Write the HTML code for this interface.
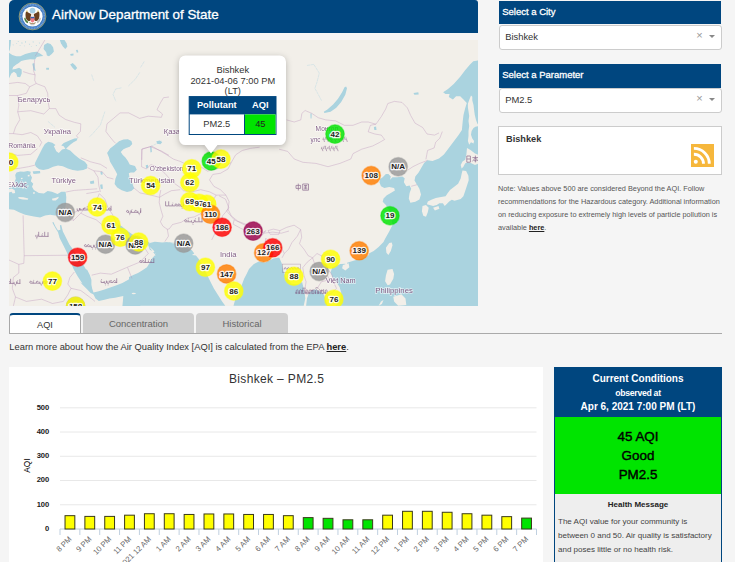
<!DOCTYPE html>
<html><head><meta charset="utf-8"><title>AirNow Department of State</title>
<style>
*{box-sizing:border-box;margin:0;padding:0}
html,body{width:735px;height:562px;overflow:hidden}
body{background:#f5f5f5;font-family:"Liberation Sans",sans-serif;color:#333;position:relative}
.abs{position:absolute}
#hdr{left:9px;top:0;width:469px;height:33px;background:#00467f;border-radius:5px 3px 0 0}
#hdr .t{left:43px;top:7px;font-size:13.4px;color:#fff;white-space:nowrap;-webkit-text-stroke:.3px #fff}
#map{left:9px;top:40px;width:469px;height:266px;background:#f2efe9;overflow:hidden}
.sh{left:498.6px;width:222.6px;height:23.3px;background:#00467f;color:#fff;font-size:9.5px;line-height:22px;padding-left:3.6px;-webkit-text-stroke:.3px #fff}
.sel{left:498.6px;width:223px;height:24.4px;background:#fff;border:1px solid #ccc;border-radius:3px;font-size:9.4px;line-height:21px;padding-left:5.6px;color:#333}
.sel .x{right:18px;top:-1px;color:#999;font-size:11px}
.sel .a{right:6px;top:8.6px;width:0;height:0;border-left:3px solid transparent;border-right:3px solid transparent;border-top:3.5px solid #888}
#rss{left:498px;top:126px;width:224px;height:49px;background:#fff;border:1px solid #ccc}
#rss b{left:7px;top:6.5px;font-size:9.2px;color:#333}
#note{left:498px;top:182px;width:230px;font-size:7.32px;line-height:13px;color:#555;white-space:nowrap}
#note b{color:#222;text-decoration:underline}
.tab{top:313px;height:20px;font-size:9.5px;line-height:22px;text-align:center;color:#666;background:#cfcfcf;border-radius:4px 4px 0 0}
#tline{left:9px;top:333px;width:713px;height:1px;background:#aaa}
#learn{left:9.3px;top:342px;font-size:9.36px;color:#333;white-space:nowrap}
#learn b{text-decoration:underline;color:#222}
#chart{left:9px;top:367px;width:534px;height:195px;background:#fff}
#cc{left:554px;top:367px;width:168px;height:195px;background:#eee;border:1px solid #00467f;border-bottom:0}
#cc .h{left:0;top:0;width:166px;height:49px;background:#00467f;color:#fff;text-align:center;font-weight:bold}
#cc .g{left:0;top:49px;width:166px;height:77px;background:#00e400;color:#000;text-align:center;font-size:13.4px;-webkit-text-stroke:.4px #000}
</style></head><body>
<div id="hdr" class="abs"><svg class="abs" style="left:9px;top:2px" width="29" height="29" viewBox="-14.5 -14.5 29 29">
<circle r="13.4" fill="#3d79c3" stroke="#b9ad5c" stroke-width=".7"/>
<circle r="11.8" fill="none" stroke="#78a4da" stroke-width="1.5" stroke-dasharray="1 .6"/>
<circle r="10.1" fill="#fdfdfb"/>
<circle cx="0" cy="-5.9" r="2.9" fill="#a5cfe4"/>
<path d="M-1-2.2C-3-3-5.5-5-6.6-4.6C-7.4-2-7 1.5-5.6 3.6C-4.2 5-2.4 4.6-1.6 3.2L-1.8 0zM1-2.2C3-3 5.5-5 6.6-4.6C7.4-2 7 1.5 5.6 3.6C4.2 5 2.4 4.6 1.6 3.2L1.8 0z" fill="#6a4220"/>
<path d="M-6.4-4.8l.9-1.6.8 1.9zM6.4-4.8l-.9-1.6-.8 1.9z" fill="#c9b44a"/>
<path d="M-1.9.3h3.8v3.6c0 1.3-1.9 2.1-1.9 2.1s-1.9-.8-1.9-2.1z" fill="#f07a86"/>
<path d="M-1.9.3h3.8v1.5h-3.8z" fill="#2f63ad"/>
<path d="M-1.3-1.9c.3-1 2.3-1 2.6 0l-.4 1.9h-1.8z" fill="#f4f1e8"/>
<path d="M-8.3 1.5c0 2.5 1.6 4.6 3.4 5.2l.8-1.4c-1.6-.8-2.8-2.3-3-4.2z" fill="#4f8040"/>
<path d="M8.3 1.5c0 2.5-1.6 4.6-3.4 5.2l-.8-1.4c1.6-.8 2.8-2.3 3-4.2z" fill="#b8b8b8"/>
<path d="M-3.4 5.2c1 .9 2.2 1.4 3.4 1.4s2.4-.5 3.4-1.4l-.6 1.9c-.8.7-1.8 1-2.8 1s-2-.3-2.8-1z" fill="#8a6a3c" fill-opacity=".7"/>
<path d="M-2.2 7.5h4.4l-.5 1.3h-3.4z" fill="#c9c9c9"/>
</svg><div class="abs t">AirNow Department of State</div></div>
<div id="map" class="abs"><svg class="abs" style="left:0;top:0" width="469" height="266" viewBox="0 0 469 266">
<rect width="469" height="266" fill="#f2efe9"/>
<defs><filter id="sb" x="-2%" y="-2%" width="104%" height="104%"><feGaussianBlur stdDeviation=".38"/></filter><filter id="mb" x="-2%" y="-2%" width="104%" height="104%"><feGaussianBlur stdDeviation=".45"/></filter></defs><g filter="url(#sb)">
<g fill="#aad3df"><path d="M0.0 12.7 3.3 15.0 7.3 16.3 11.4 16.3 16.3 13.9 22.9 12.2 27.8 11.8 31.8 13.9 34.3 16.0 31.8 16.3 27.8 17.1 26.1 19.6 21.2 19.3 16.3 19.9 12.2 20.9 9.8 22.9 7.3 24.5 4.1 26.9 3.3 29.4 6.5 29.1 10.1 27.8 12.7 29.4 12.7 33.5 11.1 37.2 8.2 36.7 7.3 33.5 4.9 31.8 2.4 33.5 0.8 36.7 0.0 38.4Z"/><path d="M0.0 0.0 2.0 0.0 1.6 4.9 0.8 9.8 0.0 11.4Z"/><path d="M35.1 4.9 38.4 2.9 41.6 4.1 44.1 7.3 44.9 11.4 42.8 13.9 40.0 16.3 37.9 15.5 37.2 12.2 34.6 9.0Z"/><path d="M50.9 0.0 55.5 0.0 57.5 3.3 58.4 6.5 56.3 9.0 53.9 6.5 51.9 3.3Z"/><path d="M23.3 23.7 25.3 22.9 25.8 26.9 26.6 31.0 24.8 30.2 24.0 26.9Z"/><path d="M61.2 24.5 63.7 22.9 66.1 25.3 68.2 28.1 66.1 30.2 63.7 28.1Z"/><path d="M61.2 13.9 64.5 13.6 64.5 15.5 61.7 15.7Z"/><path d="M37.2 27.8 40.0 27.8 40.0 29.7 37.2 29.7Z"/><path d="M66.9 10.1 68.6 9.8 69.4 12.2 67.8 12.7Z"/><path d="M8.7 1.0 10.0 1.1 9.8 1.6 8.8 1.5Z"/><path d="M12.4 2.5 13.4 2.6 13.3 3.7 12.6 3.6Z"/><path d="M16.2 1.2 17.1 1.4 16.9 2.7 16.3 2.6Z"/><path d="M19.9 3.7 21.2 3.9 21.0 4.5 20.0 4.4Z"/><path d="M23.7 1.5 24.6 1.6 24.5 2.5 23.8 2.4Z"/><path d="M26.8 5.0 27.9 5.1 27.8 5.7 26.9 5.6Z"/><path d="M29.9 2.5 30.6 2.6 30.5 3.7 30.0 3.6Z"/><path d="M10.6 5.0 11.6 5.1 11.5 5.6 10.7 5.5Z"/><path d="M14.9 5.6 15.7 5.7 15.6 6.3 15.1 6.2Z"/><path d="M7.5 3.1 8.1 3.2 8.0 4.1 7.6 4.0Z"/><path d="M21.8 6.2 22.8 6.3 22.7 6.7 21.9 6.6Z"/><path d="M3.7 4.4 4.5 4.5 4.4 5.4 3.9 5.2Z"/><path d="M26.1 122.7 28.6 117.8 31.0 112.9 33.5 108.0 35.9 103.9 39.2 101.8 43.3 102.7 46.5 105.0 44.9 106.3 47.3 111.2 49.8 112.9 53.1 109.6 56.3 108.8 54.7 106.3 52.2 105.5 54.7 103.1 60.4 100.6 65.3 98.5 68.6 98.2 67.8 100.6 64.5 102.2 61.2 104.7 58.8 107.1 57.1 108.8 61.2 110.4 65.3 114.5 70.2 118.6 75.9 121.8 78.4 125.1 78.0 128.4 74.3 130.0 68.6 130.8 63.7 130.0 58.8 128.4 53.9 126.2 49.0 125.6 44.1 126.7 39.2 128.9 34.3 130.0 30.2 129.2 26.9 126.7 25.8 124.3Z"/><path d="M23.7 131.6 31.0 131.1 31.3 133.3 24.5 133.8Z"/><path d="M80.8 141.4 84.9 140.6 85.2 143.6 81.6 143.9Z"/><path d="M91.1 144.7 93.4 144.2 93.9 148.8 91.8 149.1Z"/><path d="M91.4 132.1 93.4 131.8 93.7 134.4 91.9 134.7Z"/><path d="M98.1 112.9 101.1 108.4 105.6 104.9 110.0 101.3 114.4 99.6 118.9 99.2 122.4 101.0 123.3 104.0 120.7 106.7 117.1 108.1 114.4 109.3 111.8 112.0 113.6 114.7 116.2 117.3 118.9 120.9 120.7 124.4 126.0 125.9 127.8 129.8 125.1 132.4 121.6 132.4 119.8 133.3 120.7 138.7 123.3 143.1 125.1 148.4 122.4 151.1 118.0 152.0 112.7 150.2 108.2 147.6 105.6 144.0 106.4 138.7 108.2 134.2 106.4 130.7 103.8 126.2 101.1 121.8 99.9 117.3Z"/><path d="M147.3 101.3 150.9 100.6 153.2 102.2 151.4 104.2 148.2 103.8Z"/><path d="M141.1 106.7 142.5 106.7 142.9 112.0 141.5 112.4Z"/><path d="M136.7 125.3 139.0 124.8 139.3 127.6 137.2 128.4Z"/><path d="M0.0 169.2 5.0 169.8 10.0 172.3 16.2 174.8 24.9 176.6 31.1 177.5 36.1 175.6 41.1 174.8 46.1 175.5 49.8 174.8 53.5 172.3 56.0 168.5 57.0 163.6 57.3 157.3 56.6 151.7 52.3 151.7 48.5 153.9 42.9 151.7 38.6 151.1 34.9 153.6 29.9 153.1 24.9 149.9 23.0 146.8 24.3 143.7 21.8 141.2 23.0 137.4 21.2 134.3 21.8 131.8 18.7 131.0 14.9 131.8 11.2 131.5 7.5 132.4 6.2 134.9 6.8 138.7 5.6 141.8 7.5 144.9 6.2 146.8 3.7 146.1 1.2 147.4 0.0 148.0Z"/><path d="M23.7 131.8 30.5 131.2 31.1 133.1 24.9 133.7Z"/><path d="M43.3 182.4 46.5 188.2 49.0 192.2 50.6 198.0 54.7 206.1 58.0 212.7 61.2 220.8 64.5 229.0 68.6 236.3 73.5 243.7 71.0 242.2 74.3 245.5 78.3 249.6 81.6 252.9 83.7 254.1 84.5 254.5 86.5 258.6 89.8 261.0 95.5 259.8 100.4 258.6 106.1 257.8 111.8 256.5 114.3 256.1 113.9 261.0 113.4 265.9 131.4 265.9 131.4 233.3 128.1 235.7 123.2 237.3 119.2 239.8 113.4 243.1 106.9 245.5 101.2 247.6 95.5 249.6 89.8 251.2 84.5 252.4 83.2 248.8 82.4 244.7 82.4 239.8 80.8 234.9 78.3 230.0 76.7 229.0 70.2 217.6 64.5 210.2 60.4 204.5 56.3 196.3 53.9 191.4 52.2 184.9 50.9 185.2 51.4 189.8 49.0 190.6 46.5 186.5 44.4 182.0Z"/><path d="M109.1 184.3 112.8 186.2 117.2 189.9 122.1 193.6 127.1 196.7 133.4 199.2 138.3 201.1 140.8 203.0 139.0 204.8 135.8 207.3 130.9 208.6 125.9 207.3 120.9 204.8 117.2 201.1 114.0 196.1 110.9 191.1 108.4 187.4Z"/><path d="M140.8 203.0 145.8 201.7 153.3 202.4 160.8 202.1 166.0 203.0 142.9 201.2 152.7 202.0 162.4 202.9 169.0 204.5 175.5 206.9 182.9 210.2 185.3 213.5 182.9 215.1 186.9 215.6 189.4 218.4 191.8 222.4 195.1 229.0 198.4 235.5 201.6 242.0 204.9 248.6 209.0 255.1 213.1 261.6 216.3 265.7 120.0 265.7 120.0 265.7 120.0 239.6 120.0 237.1 124.9 234.7 129.0 233.1 133.1 230.6 138.0 227.3 140.4 223.3 142.9 218.4 146.9 214.3 144.5 210.2 139.6 206.1 147.1 216.1 145.8 212.3 140.8 209.8 139.0 204.8Z"/><path d="M224.5 265.7 226.1 260.0 228.6 253.5 232.7 245.3 235.1 238.8 237.6 233.9 240.0 229.0 240.0 229.0 244.9 224.1 249.8 221.6 256.3 222.4 264.5 218.4 270.2 217.6 272.7 223.3 274.3 230.6 276.7 237.1 282.4 243.7 289.0 244.5 293.1 242.0 293.9 245.3 295.5 251.8 296.3 258.4 294.7 265.7Z"/><path d="M297.1 265.7 298.0 258.4 299.6 253.5 302.9 250.2 306.9 249.4 311.8 251.8 315.1 255.1 316.7 260.0 318.4 265.7Z"/><path d="M468.9 20.4 464.3 21.2 461.0 24.5 456.1 30.2 451.2 36.7 444.7 44.1 439.0 49.0 434.1 52.2 436.5 53.9 440.6 53.9 439.8 57.1 443.9 59.6 447.1 56.3 451.2 56.3 454.5 59.6 457.8 62.9 456.1 68.6 454.5 75.1 453.7 81.6 452.9 90.0 449.6 94.9 444.7 101.4 439.8 108.0 434.9 114.5 430.0 118.6 423.5 121.0 418.6 120.2 415.3 122.7 412.9 126.7 409.6 132.4 406.3 136.5 405.5 140.6 408.0 144.7 410.4 148.8 412.0 154.5 410.4 159.4 406.3 161.8 401.4 162.7 399.8 158.6 400.6 152.9 402.2 148.8 400.6 145.5 397.3 146.3 394.9 142.2 395.7 138.2 393.3 136.5 388.4 137.3 383.5 137.3 381.0 139.8 381.8 136.5 379.4 134.1 376.9 134.1 373.7 137.3 371.2 139.0 370.4 142.2 372.0 146.3 375.3 148.0 380.2 147.1 385.1 148.0 385.9 150.4 381.8 152.9 377.8 155.3 374.5 158.6 373.7 161.8 376.9 165.1 380.2 170.0 381.8 174.9 382.7 180.0 383.5 184.9 380.2 191.4 376.1 198.8 374.5 202.0 369.6 206.9 364.7 211.0 359.8 213.5 360.0 215.1 352.7 218.4 344.5 220.8 338.0 222.8 338.0 224.1 338.8 228.2 337.1 227.3 336.3 223.8 331.4 224.1 324.9 226.5 323.3 227.3 321.6 232.2 323.3 237.1 327.3 242.0 330.6 246.9 332.2 252.7 331.4 258.4 329.0 263.3 326.5 265.7 469.0 266.0 469.0 20.0Z"/><path d="M337.1 46.5 338.0 48.2 336.3 54.7 332.2 62.0 327.3 67.8 321.6 71.8 315.4 73.0 314.8 71.8 318.4 69.4 324.1 64.5 329.0 58.8 333.1 52.2 335.5 47.3Z"/><path d="M404.5 53.1 409.3 52.2 409.7 54.4 405.4 54.8Z"/><path d="M364.9 87.0 367.1 86.6 367.5 90.1 365.3 90.1Z"/><path d="M301.4 73.5 302.7 73.5 302.5 78.4 301.6 78.4Z"/></g>
<path d="M122.8 252.9 124.9 252.7 126.9 253.2 126.5 254.0 124.1 254.2 122.9 253.7Z M42.9 158.8 46.1 158.0 49.8 156.7 49.2 158.6 46.7 160.5 43.6 160.5Z M9.3 157.1 14.3 157.3 19.3 158.6 18.7 159.8 13.7 159.6 9.7 158.6Z M0.0 149.3 2.5 148.6 5.6 149.9 6.2 153.0 3.7 153.6 2.5 151.7 0.0 152.4Z M11.8 138.1 13.4 137.8 13.7 138.9 12.1 139.2Z M15.6 141.8 17.2 141.5 17.4 142.9 15.8 143.2Z M18.1 145.5 19.4 145.3 19.7 146.5 18.3 146.8Z M13.1 147.4 14.7 147.1 14.9 148.4 13.3 148.6Z M10.0 143.0 11.5 142.7 12.0 144.4 10.5 144.6Z M23.9 152.6 25.6 152.1 25.9 153.6 24.4 154.1Z M18.7 134.9 20.5 134.7 20.7 136.2 18.9 136.4Z M462.0 55.6 463.3 56.8 463.3 60.6 464.5 64.9 465.1 69.9 465.8 74.9 467.0 79.9 468.3 83.6 470.1 86.1 466.4 86.7 464.5 88.0 462.6 91.1 462.0 94.8 463.3 98.6 465.1 101.1 464.5 103.6 462.0 102.3 460.2 104.8 458.9 101.1 459.5 96.1 459.5 91.1 460.2 86.1 459.5 81.1 460.2 76.1 459.5 71.2 458.9 67.4 458.9 63.7 460.2 59.9Z M458.0 108.1 461.5 109.9 466.0 113.5 470.4 115.3 470.4 123.3 466.0 125.1 462.4 123.3 458.8 122.4 456.2 123.3 454.4 126.8 452.6 128.6 451.7 125.1 453.5 121.5 456.2 119.7 457.4 114.4Z M453.5 130.4 457.1 130.9 459.4 135.7 459.7 140.2 458.0 145.5 456.2 150.9 454.4 156.2 451.7 158.9 449.1 159.8 445.5 160.7 442.8 159.8 440.2 161.6 437.5 164.2 435.7 166.0 433.9 163.3 430.4 163.3 427.7 165.1 424.1 166.0 420.6 165.1 417.9 164.2 418.8 161.6 422.4 159.8 426.8 158.0 432.1 157.1 436.6 156.2 438.4 153.5 441.0 150.0 444.6 147.3 449.1 143.8 451.7 138.4 452.6 134.0Z M413.5 166.0 417.0 165.1 419.7 167.8 418.8 172.2 417.0 176.7 414.3 175.8 412.9 171.3Z M424.1 167.8 429.5 166.0 430.4 168.7 425.9 170.5Z M380.2 202.9 382.7 202.5 383.5 205.3 381.8 211.0 379.4 215.1 377.4 212.7 376.9 207.8Z M378.6 229.8 383.5 229.0 385.1 233.9 384.3 238.8 381.0 244.5 378.6 245.3 376.1 241.2 376.9 235.5Z M384.3 256.7 392.4 254.3 396.5 258.4 397.3 264.9 389.2 265.7 385.1 261.6Z M369.6 265.7 372.0 261.6 374.5 260.0 372.9 264.1Z M333.9 224.9 339.6 223.3 340.4 227.3 336.3 230.6 333.1 228.2Z" fill="#f2efe9"/>
<path d="M112.1 47.9 106.7 49.0 104.0 54.4 106.7 60.9 M130.6 32.7 126.3 39.2 119.7 45.7 M135.0 21.8 131.7 27.2 M95.8 71.8 91.4 84.9 83.8 93.6 80.5 96.9 M82.7 34.8 84.5 40.3 M39.2 81.6 45.7 87.1 M141.5 106.7 150.2 102.3 152.4 101.2 M298.3 25.4 304.8 24.4 310.3 33.1 308.1 41.8 305.9 48.3 312.4 60.3" fill="none" stroke="#aad3df" stroke-width=".8" stroke-opacity=".45" stroke-linecap="round" stroke-dasharray="2.5 1.2"/>
<path d="M35.9 0.0 26.1 16.3 M25.7 19.6 24.4 30.5 26.1 34.8 M14.1 31.6 20.7 33.7 26.1 34.8 25.7 40.3 27.2 43.5 M0.0 43.5 8.7 42.4 16.3 43.5 20.7 46.8 27.2 43.5 M20.7 46.8 17.4 53.3 8.7 55.5 0.0 55.5 M8.7 55.5 9.8 65.3 8.7 71.8 10.9 79.5 6.5 87.1 4.4 93.6 M27.2 43.5 35.9 46.8 38.7 53.3 39.2 62.0 40.3 68.6 M8.7 71.8 21.8 70.7 34.8 74.0 40.3 68.6 M40.3 68.6 46.8 68.6 50.1 75.1 56.6 79.5 65.3 82.3 71.8 83.8 71.4 91.4 67.5 95.8 69.2 98.0 M4.4 93.6 13.1 94.7 21.8 92.5 28.3 95.8 32.7 102.3 30.5 106.7 M0.0 93.6 4.4 93.6 M0.0 113.2 8.7 115.4 21.8 114.3 28.3 108.8 M160.0 57.0 154.5 57.7 151.3 63.1 148.0 69.7 153.5 74.0 152.4 77.3 139.3 76.2 130.6 78.4 119.7 72.9 111.0 72.9 104.5 78.4 98.0 83.8 96.9 91.4 100.1 95.8 104.5 101.2 106.7 103.4 M132.8 119.9 133.2 108.8 141.5 106.7 152.4 111.0 160.0 115.4 M0.0 129.2 9.8 128.4 19.6 126.7 26.1 125.1 M57.1 152.0 65.3 150.4 76.7 149.6 88.2 148.8 M71.8 117.8 81.6 121.8 91.4 124.3 98.0 128.4 M78.4 127.6 84.9 130.8 89.0 137.3 89.8 145.5 91.4 152.0 M84.9 130.8 93.1 131.6 98.0 137.3 104.5 139.0 M132.6 126.8 132.6 109.4 142.9 106.1 155.9 113.7 164.6 119.2 171.2 121.4 175.5 123.5 M132.6 126.8 137.4 129.0 141.8 124.6 148.3 126.8 155.9 133.3 163.5 142.0 171.2 147.5 174.4 150.7 M124.4 147.5 130.9 152.9 141.8 155.1 150.5 157.3 155.9 154.0 162.4 150.7 171.2 149.7 M191.8 126.8 198.4 131.2 207.1 129.0 215.8 126.8 222.3 122.4 226.7 114.8 233.2 110.5 241.9 108.3 250.6 107.2 M222.3 122.4 219.0 129.0 211.4 133.3 203.8 134.4 200.5 139.9 204.9 146.4 211.4 149.7 216.9 155.1 M174.4 150.7 183.1 151.8 191.8 149.7 200.5 151.8 207.1 155.1 216.9 155.1 220.1 161.6 219.0 169.2 M219.0 169.2 222.3 175.8 228.8 181.2 237.5 184.5 246.3 188.8 255.0 193.2 263.7 192.1 272.4 193.2 280.0 191.0 M207.1 155.1 202.7 162.7 196.2 167.1 191.8 173.6 185.3 176.9 178.8 178.0 172.2 182.3 163.5 184.5 160.3 188.8 M151.8 150.0 150.8 155.0 150.2 162.5 152.0 170.0 153.9 176.2 151.4 181.8 153.9 186.2 158.3 189.3 159.5 196.1 155.8 201.7 M158.3 189.3 160.3 188.8 M219.0 169.2 213.6 175.8 211.4 184.5 207.1 191.0 202.7 199.9 M277.6 79.9 285.2 82.0 291.8 79.9 292.9 73.3 296.1 70.5 302.7 73.3 309.2 77.7 316.8 79.9 326.6 80.9 335.3 85.3 344.0 85.3 352.7 82.0 359.2 82.0 366.9 84.2 M366.9 84.2 372.3 76.6 376.7 69.0 378.8 63.5 385.4 61.4 393.0 62.4 398.4 67.9 401.7 75.5 406.0 83.1 413.7 87.5 418.0 94.0 425.6 95.1 430.0 92.9 M270.0 109.2 278.7 111.4 285.2 119.0 293.9 122.3 307.0 123.4 319.0 126.7 330.9 123.4 341.8 119.0 344.0 113.6 352.7 109.2 363.6 106.0 370.1 102.7 375.6 99.5 372.3 95.1 365.8 94.0 359.2 91.8 361.4 85.3 366.9 84.2 M433.3 91.6 430.8 98.2 426.7 102.2 425.1 108.0 418.6 110.4 417.8 114.5 416.9 119.4 M399.0 130.0 403.9 126.7 410.4 123.5 416.9 121.0 418.6 120.2 M402.2 146.3 408.0 144.7 M210.0 155.8 216.5 159.1 219.8 167.8 217.6 171.0 225.2 179.7 233.9 184.1 242.7 188.4 253.5 192.8 256.8 190.6 M225.2 179.7 224.1 184.1 231.8 188.4 242.7 192.8 253.5 195.0 256.8 190.6 M259.0 190.6 264.4 189.1 270.9 190.6 269.9 194.3 261.2 194.3 259.0 190.6 M270.9 190.6 277.5 187.4 285.1 185.2 291.6 189.5 288.4 196.1 282.9 202.6 279.7 209.1 275.3 213.5 273.1 217.8 M261.2 217.8 259.0 211.3 255.7 204.8 256.8 198.2 261.2 202.6 266.6 201.5 272.0 202.6 273.1 209.1 275.3 213.5 M291.6 189.5 292.7 197.2 290.5 203.7 294.9 209.1 299.2 215.7 303.6 217.8 M303.6 217.8 298.2 222.2 293.8 227.6 294.9 235.2 297.1 241.8 296.0 248.3 298.2 254.8 M303.6 217.8 308.0 213.5 312.3 215.7 318.8 213.5 323.2 215.7 330.8 220.0 M312.3 215.7 314.5 222.2 318.8 228.7 323.2 235.2 324.3 241.8 327.5 248.3 323.2 252.7 318.8 254.8 M303.6 217.8 305.8 224.4 303.6 232.0 310.1 229.8 316.7 233.1 321.0 239.6 324.3 241.8 M321.0 239.6 312.3 241.8 309.0 247.2 M14.1 175.4 15.2 215.7 59.9 215.2 M15.2 215.7 14.8 223.3 9.8 224.4 9.8 233.1 4.4 237.4 3.3 248.3 6.5 257.0 4.4 265.9 M0.0 220.0 9.8 224.4 M65.3 232.0 60.9 237.4 58.8 244.0 62.0 248.3 58.8 254.8 54.4 261.4 M62.0 248.3 71.8 250.5 80.5 257.0 86.0 261.4 M6.5 257.0 17.4 261.4 32.7 259.2 43.5 263.5 54.4 261.4 M82.7 235.2 91.4 233.1 102.3 234.2 117.5 227.6 130.6 222.2 139.3 213.5 135.0 206.9 128.4 205.9 M118.6 227.6 123.0 238.5 M64.2 180.8 71.8 173.2 78.4 176.5 87.1 179.7 93.6 185.2 102.3 188.4 104.5 191.7 M90.3 153.6 95.8 159.1 99.0 167.8 103.4 174.3 107.7 184.1 111.0 187.4 M77.3 153.6 90.3 151.4 M90.3 153.6 87.1 161.2 76.2 167.8 71.8 173.2 M64.2 180.8 63.1 173.2 76.2 167.8 M58.8 172.1 62.0 180.8" fill="none" stroke="#b48ab4" stroke-width=".65" stroke-opacity=".55" stroke-linejoin="round"/>
</g>
<g font-family="Liberation Sans, sans-serif" fill="#7b5680" stroke="#fff" stroke-width="1.3" stroke-opacity=".65" paint-order="stroke" opacity=".95">
<text x="8.7" y="62.0" font-size="7.4" textLength="32.7" lengthAdjust="spacingAndGlyphs">Беларусь</text>
<text x="34.8" y="94.0" font-size="7.2" textLength="27.2" lengthAdjust="spacingAndGlyphs">Україна</text>
<text x="-0.8" y="108.3" font-size="7.2" textLength="27.4" lengthAdjust="spacingAndGlyphs">România</text>
<text x="-2.5" y="147.4" font-size="7.2" textLength="20.5" lengthAdjust="spacingAndGlyphs">Ελλάς</text>
<text x="42.4" y="143.0" font-size="7.2" textLength="24.6" lengthAdjust="spacingAndGlyphs">Türkiye</text>
<text x="154.8" y="93.6" font-size="7.2" textLength="35.2" lengthAdjust="spacingAndGlyphs">Қазақстан</text>
<text x="140.7" y="131.0" font-size="7.2" textLength="33.7" lengthAdjust="spacingAndGlyphs">O'zbekiston</text>
<text x="120.0" y="143.0" font-size="7.2" textLength="45.7" lengthAdjust="spacingAndGlyphs">Türkmenistan</text>
<text x="211.0" y="217.2" font-size="7.2" textLength="16.4" lengthAdjust="spacingAndGlyphs">India</text>
<text x="366.3" y="253.2" font-size="7.2" textLength="37.6" lengthAdjust="spacingAndGlyphs">Philippines</text>
<text x="316.7" y="243.4" font-size="7.2" textLength="30.0" lengthAdjust="spacingAndGlyphs">Việt Nam</text>
<text x="306.6" y="90.8" font-size="7.2" textLength="22.4" lengthAdjust="spacingAndGlyphs">Монгол</text>
<text x="301.6" y="102.2" font-size="7.2" textLength="9.8" lengthAdjust="spacingAndGlyphs">улс</text>
</g>
<g opacity=".8">
<path d="M131.7 168.6V172.4M131.7 170.9q.3 2.6 -1.5 2.6t-1.5 -2.2M128.7 172.4H126.7a1 1 0 1 1 1 -1.3M125.7 172.4H122.4v-1.6M122.0 170.9q.3 2.6 -1.2 2.6t-1.2 -2.2M119.0 172.4H118.5a1 1 0 1 1 1 -1.3" fill="none" stroke="#7b5680" stroke-width=".75" stroke-linecap="round" stroke-linejoin="round"/><circle cx="130.2" cy="174.8" r=".45" fill="#7b5680"/><circle cx="123.0" cy="169.4" r=".45" fill="#7b5680"/><circle cx="120.8" cy="174.8" r=".45" fill="#7b5680"/>
<path d="M174.4 162.1V165.9M174.4 164.4q.3 2.6 -1.3 2.6t-1.3 -2.2M171.3 165.9H169.9a1 1 0 1 1 1 -1.3M168.8 165.9H167.0a1 1 0 1 1 1 -1.3M165.7 165.9H163.3v-1.6M162.8 165.9H159.7V161.7M159.0 165.9H156.6V161.7" fill="none" stroke="#7b5680" stroke-width=".75" stroke-linecap="round" stroke-linejoin="round"/><circle cx="173.1" cy="168.3" r=".45" fill="#7b5680"/><circle cx="163.9" cy="162.9" r=".45" fill="#7b5680"/>
<path d="M193.0 178.0V181.8M193.0 181.8H189.9V177.6M189.3 181.8H186.1v-1.6M185.4 180.3q.3 2.6 -1.5 2.6t-1.5 -2.2M181.7 181.8H179.1v-1.6M178.4 181.8H176.6a1 1 0 1 1 1 -1.3" fill="none" stroke="#7b5680" stroke-width=".75" stroke-linecap="round" stroke-linejoin="round"/><circle cx="186.7" cy="178.8" r=".45" fill="#7b5680"/><circle cx="184.0" cy="184.2" r=".45" fill="#7b5680"/><circle cx="179.7" cy="178.8" r=".45" fill="#7b5680"/>
<path d="M144.8 218.7V222.5M144.8 222.5H142.0v-1.6M141.8 222.5H139.4v-1.6M139.0 222.5H136.4V218.3M136.4 222.5H134.2a1 1 0 1 1 1 -1.3M132.6 222.5H131.6a1 1 0 1 1 1 -1.3" fill="none" stroke="#7b5680" stroke-width=".75" stroke-linecap="round" stroke-linejoin="round"/><circle cx="142.6" cy="219.5" r=".45" fill="#7b5680"/><circle cx="140.0" cy="219.5" r=".45" fill="#7b5680"/>
<path d="M39.0 192.6V196.4M39.0 196.4H35.7V192.2M35.3 196.4H33.1v-1.6M32.6 196.4H29.7V192.2M29.0 194.9q.3 2.6 -1.1 2.6t-1.1 -2.2" fill="none" stroke="#7b5680" stroke-width=".75" stroke-linecap="round" stroke-linejoin="round"/><circle cx="33.7" cy="193.4" r=".45" fill="#7b5680"/><circle cx="27.9" cy="198.8" r=".45" fill="#7b5680"/>
<path d="M91.0 202.8V206.6M91.0 205.1q.3 2.6 -1.3 2.6t-1.3 -2.2M88.1 205.1q.3 2.6 -1.5 2.6t-1.5 -2.2M84.9 205.1q.3 2.6 -1.6 2.6t-1.6 -2.2M81.4 206.6H79.4a1 1 0 1 1 1 -1.3M78.0 206.6H76.4a1 1 0 1 1 1 -1.3" fill="none" stroke="#7b5680" stroke-width=".75" stroke-linecap="round" stroke-linejoin="round"/><circle cx="89.7" cy="209.0" r=".45" fill="#7b5680"/><circle cx="86.5" cy="209.0" r=".45" fill="#7b5680"/><circle cx="83.4" cy="209.0" r=".45" fill="#7b5680"/>
<path d="M37.0 239.4V243.2M37.0 243.2H35.1a1 1 0 1 1 1 -1.3M33.9 241.7q.3 2.6 -1.6 2.6t-1.6 -2.2M30.6 243.2H28.3a1 1 0 1 1 1 -1.3M27.3 243.2H24.2v-1.6M24.1 243.2H21.7a1 1 0 1 1 1 -1.3" fill="none" stroke="#7b5680" stroke-width=".75" stroke-linecap="round" stroke-linejoin="round"/><circle cx="32.2" cy="245.6" r=".45" fill="#7b5680"/><circle cx="24.8" cy="240.2" r=".45" fill="#7b5680"/>
<path d="M10.9 239.6V243.4M10.9 243.4H8.2v-1.6M7.7 241.9q.3 2.6 -1.4 2.6t-1.4 -2.2M4.6 243.4H1.6V239.2M1.5 243.4H0.0a1 1 0 1 1 1 -1.3" fill="none" stroke="#7b5680" stroke-width=".75" stroke-linecap="round" stroke-linejoin="round"/><circle cx="8.8" cy="240.4" r=".45" fill="#7b5680"/><circle cx="6.3" cy="245.8" r=".45" fill="#7b5680"/>
<path d="M107.7 238.7V242.5M107.7 242.5H105.5a1 1 0 1 1 1 -1.3M103.8 242.5H102.0a1 1 0 1 1 1 -1.3M100.3 241.0q.3 2.6 -1.2 2.6t-1.2 -2.2M97.5 241.0q.3 2.6 -1.2 2.6t-1.2 -2.2M95.0 242.5H92.1v-1.6" fill="none" stroke="#7b5680" stroke-width=".75" stroke-linecap="round" stroke-linejoin="round"/><circle cx="99.1" cy="244.9" r=".45" fill="#7b5680"/><circle cx="96.4" cy="244.9" r=".45" fill="#7b5680"/><circle cx="92.7" cy="239.5" r=".45" fill="#7b5680"/>
<path d="M102.0 166.2V170.0M102.0 170.0H100.5a1 1 0 1 1 1 -1.3M99.1 170.0H96.7V165.8M96.7 170.0H93.9V165.8M93.4 170.0H91.4a1 1 0 1 1 1 -1.3M89.9 170.0H86.9v-1.6M86.8 170.0H85.1a1 1 0 1 1 1 -1.3M83.8 168.5q.3 2.6 -1.1 2.6t-1.1 -2.2M80.9 170.0H78.1v-1.6M77.5 170.0H75.3a1 1 0 1 1 1 -1.3M74.2 170.0H71.0v-1.6M70.5 168.5q.3 2.6 -1.2 2.6t-1.2 -2.2" fill="none" stroke="#7b5680" stroke-width=".75" stroke-linecap="round" stroke-linejoin="round"/><circle cx="87.5" cy="167.0" r=".45" fill="#7b5680"/><circle cx="82.7" cy="172.4" r=".45" fill="#7b5680"/><circle cx="78.7" cy="167.0" r=".45" fill="#7b5680"/>
<path d="M287.1 253.5a.6 .6 0 1 1 .1 0v-3q1.0 -1.4 1.9 0v3.2M290.3 253.5a.6 .6 0 1 1 .1 0v-3q1.0 -1.4 1.9 0v3.2M293.3 250.0a.6 .6 0 1 0 .1 0v3.6h1.8v-4M296.8 253.5a.6 .6 0 1 1 .1 0v-3q1.0 -1.4 1.9 0v3.2M300.0 253.5a.6 .6 0 1 1 .1 0v-3q1.0 -1.4 1.9 0v3.2M303.0 250.0a.6 .6 0 1 0 .1 0v3.6h1.8v-4M306.4 253.5a.6 .6 0 1 1 .1 0v-3q1.0 -1.4 1.9 0v3.2M309.6 253.5a.6 .6 0 1 1 .1 0v-3q1.0 -1.4 1.9 0v3.2M312.7 250.0a.6 .6 0 1 0 .1 0v3.6h1.8v-4M316.1 253.5a.6 .6 0 1 1 .1 0v-3q1.0 -1.4 1.9 0v3.2M293.7 248.2h2.6M306.6 248.0q1.3 -1 2.6 0" fill="none" stroke="#7b5680" stroke-width=".7" stroke-linecap="round"/>
<path d="M287.0 145.4h4.6v3h-4.6zM289.3 143.6v6.9M293.7 144.0h5.8v6.2h-5.8zM295.0 145.5h3.2M295.0 147.1h3.2M294.8 148.8h3.6M296.6 145.5v3.3" fill="none" stroke="#7b5680" stroke-width=".75"/>
<path d="M457.8 116.0h3.6v6.2h-3.6zM457.8 119.0h3.6M463.4 117.6h6M466.4 115.6v6.8M466.4 117.8l-3 3.6M466.4 117.8l3 3.6M465.0 120.7h2.8" fill="none" stroke="#7b5680" stroke-width=".75"/>
<path d="M312.4 108.8l0.4 -1.6M313.2 108.8l.6 2M314.3 108.8l1.0 -2.6M316.2 108.8l0.4 -2.6M317.0 108.8l.6 2M318.1 108.8l1.0 -1.6M320.0 108.8l0.4 -2.6M320.8 108.8l.6 2M321.9 108.8l1.0 -2.6M323.8 108.8l0.4 -1.6M324.6 108.8l.6 2M325.7 108.8l1.0 -2.6M327.6 108.8l0.4 -2.6M328.4 108.8l.6 2" fill="none" stroke="#7b5680" stroke-width=".6" stroke-linecap="round"/>
<path d="M314.0 99.6l0.4 -1.6M314.8 99.6l.6 2M315.9 99.6l1.0 -2.6M317.8 99.6l0.4 -2.6M318.6 99.6l.6 2M319.7 99.6l1.0 -1.6M321.6 99.6l0.4 -2.6M322.4 99.6l.6 2M323.5 99.6l1.0 -2.6M325.4 99.6l0.4 -1.6M326.2 99.6l.6 2M327.3 99.6l1.0 -2.6M329.2 99.6l0.4 -2.6M330.0 99.6l.6 2M331.1 99.6l1.0 -1.6M333.0 99.6l0.4 -2.6M333.8 99.6l.6 2M334.9 99.6l1.0 -2.6M336.8 99.6l0.4 -1.6M337.6 99.6l.6 2" fill="none" stroke="#7b5680" stroke-width=".6" stroke-linecap="round"/>
<rect x="273.6" y="224.1" width="18.0" height="8.2" fill="none" stroke="#7b5680" stroke-width=".5" stroke-opacity=".7"/><path d="M275.1 229.5a1.1 1.9 0 1 1 2.2 0M278.3 229.5a1.1 1.9 0 1 1 2.2 0M281.5 229.5a1.1 1.9 0 1 1 2.2 0M284.7 229.5a1.1 1.9 0 1 1 2.2 0M287.9 229.5a1.1 1.9 0 1 1 2.2 0" fill="none" stroke="#7b5680" stroke-width=".7"/>
</g><defs><filter id="pb" x="-20%" y="-20%" width="140%" height="140%"><feGaussianBlur stdDeviation="3"/></filter></defs><g filter="url(#mb)">
<circle cx="-0.2" cy="122.0" r="9.3" fill="#ffff00" fill-opacity=".82" stroke="#ffff00" stroke-opacity=".4" stroke-width="1.4"/>
<circle cx="56.3" cy="172.4" r="9.3" fill="#999999" fill-opacity=".82" stroke="#999999" stroke-opacity=".4" stroke-width="1.4"/>
<circle cx="88.2" cy="167.0" r="9.3" fill="#ffff00" fill-opacity=".82" stroke="#ffff00" stroke-opacity=".4" stroke-width="1.4"/>
<circle cx="102.0" cy="184.9" r="9.3" fill="#ffff00" fill-opacity=".82" stroke="#ffff00" stroke-opacity=".4" stroke-width="1.4"/>
<circle cx="96.5" cy="204.2" r="9.3" fill="#999999" fill-opacity=".82" stroke="#999999" stroke-opacity=".4" stroke-width="1.4"/>
<circle cx="111.3" cy="197.3" r="9.3" fill="#ffff00" fill-opacity=".82" stroke="#ffff00" stroke-opacity=".4" stroke-width="1.4"/>
<circle cx="126.2" cy="205.0" r="9.3" fill="#999999" fill-opacity=".82" stroke="#999999" stroke-opacity=".4" stroke-width="1.4"/>
<circle cx="129.7" cy="202.0" r="9.3" fill="#ffff00" fill-opacity=".82" stroke="#ffff00" stroke-opacity=".4" stroke-width="1.4"/>
<circle cx="68.6" cy="217.2" r="9.3" fill="#ff0000" fill-opacity=".82" stroke="#ff0000" stroke-opacity=".4" stroke-width="1.4"/>
<circle cx="43.4" cy="241.1" r="9.3" fill="#ffff00" fill-opacity=".82" stroke="#ffff00" stroke-opacity=".4" stroke-width="1.4"/>
<circle cx="66.6" cy="266.2" r="9.3" fill="#999999" fill-opacity=".82" stroke="#999999" stroke-opacity=".4" stroke-width="1.4"/>
<circle cx="66.6" cy="266.2" r="9.3" fill="#ffff00" fill-opacity=".82" stroke="#ffff00" stroke-opacity=".4" stroke-width="1.4"/>
<circle cx="141.6" cy="145.5" r="9.3" fill="#ffff00" fill-opacity=".82" stroke="#ffff00" stroke-opacity=".4" stroke-width="1.4"/>
<circle cx="182.8" cy="128.7" r="9.3" fill="#ffff00" fill-opacity=".82" stroke="#ffff00" stroke-opacity=".4" stroke-width="1.4"/>
<circle cx="180.8" cy="142.5" r="9.3" fill="#ffff00" fill-opacity=".82" stroke="#ffff00" stroke-opacity=".4" stroke-width="1.4"/>
<circle cx="202.3" cy="121.0" r="9.3" fill="#00e400" fill-opacity=".82" stroke="#00e400" stroke-opacity=".4" stroke-width="1.4"/>
<circle cx="212.0" cy="119.1" r="9.3" fill="#ffff00" fill-opacity=".82" stroke="#ffff00" stroke-opacity=".4" stroke-width="1.4"/>
<circle cx="180.8" cy="161.6" r="9.3" fill="#ffff00" fill-opacity=".82" stroke="#ffff00" stroke-opacity=".4" stroke-width="1.4"/>
<circle cx="190.0" cy="163.2" r="9.3" fill="#ffff00" fill-opacity=".82" stroke="#ffff00" stroke-opacity=".4" stroke-width="1.4"/>
<circle cx="197.8" cy="164.2" r="9.3" fill="#ffff00" fill-opacity=".82" stroke="#ffff00" stroke-opacity=".4" stroke-width="1.4"/>
<circle cx="201.6" cy="174.3" r="9.3" fill="#ff7e00" fill-opacity=".82" stroke="#ff7e00" stroke-opacity=".4" stroke-width="1.4"/>
<circle cx="213.1" cy="187.3" r="9.3" fill="#ff0000" fill-opacity=".82" stroke="#ff0000" stroke-opacity=".4" stroke-width="1.4"/>
<circle cx="174.7" cy="203.3" r="9.3" fill="#999999" fill-opacity=".82" stroke="#999999" stroke-opacity=".4" stroke-width="1.4"/>
<circle cx="196.4" cy="227.3" r="9.3" fill="#ffff00" fill-opacity=".82" stroke="#ffff00" stroke-opacity=".4" stroke-width="1.4"/>
<circle cx="217.6" cy="233.9" r="9.3" fill="#ff7e00" fill-opacity=".82" stroke="#ff7e00" stroke-opacity=".4" stroke-width="1.4"/>
<circle cx="224.8" cy="251.0" r="9.3" fill="#ffff00" fill-opacity=".82" stroke="#ffff00" stroke-opacity=".4" stroke-width="1.4"/>
<circle cx="244.1" cy="191.1" r="9.3" fill="#99004c" fill-opacity=".82" stroke="#99004c" stroke-opacity=".4" stroke-width="1.4"/>
<circle cx="254.7" cy="212.7" r="9.3" fill="#ff7e00" fill-opacity=".82" stroke="#ff7e00" stroke-opacity=".4" stroke-width="1.4"/>
<circle cx="263.7" cy="207.8" r="9.3" fill="#ff0000" fill-opacity=".82" stroke="#ff0000" stroke-opacity=".4" stroke-width="1.4"/>
<circle cx="310.2" cy="231.4" r="9.3" fill="#999999" fill-opacity=".82" stroke="#999999" stroke-opacity=".4" stroke-width="1.4"/>
<circle cx="321.6" cy="219.2" r="9.3" fill="#ffff00" fill-opacity=".82" stroke="#ffff00" stroke-opacity=".4" stroke-width="1.4"/>
<circle cx="284.9" cy="236.3" r="9.3" fill="#ffff00" fill-opacity=".82" stroke="#ffff00" stroke-opacity=".4" stroke-width="1.4"/>
<circle cx="350.2" cy="210.8" r="9.3" fill="#ff7e00" fill-opacity=".82" stroke="#ff7e00" stroke-opacity=".4" stroke-width="1.4"/>
<circle cx="324.9" cy="259.2" r="9.3" fill="#ffff00" fill-opacity=".82" stroke="#ffff00" stroke-opacity=".4" stroke-width="1.4"/>
<circle cx="326.0" cy="94.1" r="9.3" fill="#00e400" fill-opacity=".82" stroke="#00e400" stroke-opacity=".4" stroke-width="1.4"/>
<circle cx="362.2" cy="135.5" r="9.3" fill="#ff7e00" fill-opacity=".82" stroke="#ff7e00" stroke-opacity=".4" stroke-width="1.4"/>
<circle cx="389.2" cy="126.7" r="9.3" fill="#999999" fill-opacity=".82" stroke="#999999" stroke-opacity=".4" stroke-width="1.4"/>
<circle cx="381.0" cy="175.7" r="9.3" fill="#00e400" fill-opacity=".82" stroke="#00e400" stroke-opacity=".4" stroke-width="1.4"/>
</g><g font-family="Liberation Sans, sans-serif" font-size="8" font-weight="bold" text-anchor="middle" fill="#222" stroke="#fff" stroke-width="2.6" stroke-opacity=".9" stroke-linejoin="round" paint-order="stroke">
<text x="-0.2" y="124.6">60</text>
<text x="56.3" y="175.0">N/A</text>
<text x="88.2" y="169.6">74</text>
<text x="102.0" y="187.5">61</text>
<text x="96.5" y="206.8">N/A</text>
<text x="111.3" y="199.9">76</text>
<text x="126.2" y="207.6">N/A</text>
<text x="129.7" y="204.6">88</text>
<text x="68.6" y="219.8">159</text>
<text x="43.4" y="243.7">77</text>
<text x="66.6" y="268.8"></text>
<text x="66.6" y="268.8">158</text>
<text x="141.6" y="148.1">54</text>
<text x="182.8" y="131.3">71</text>
<text x="180.8" y="145.1">62</text>
<text x="202.3" y="123.6">45</text>
<text x="212.0" y="121.7">58</text>
<text x="180.8" y="164.2">69</text>
<text x="190.0" y="165.8">97</text>
<text x="197.8" y="166.8">61</text>
<text x="201.6" y="176.9">110</text>
<text x="213.1" y="189.9">186</text>
<text x="174.7" y="205.9">N/A</text>
<text x="196.4" y="229.9">97</text>
<text x="217.6" y="236.5">147</text>
<text x="224.8" y="253.6">86</text>
<text x="244.1" y="193.7">263</text>
<text x="254.7" y="215.3">127</text>
<text x="263.7" y="210.4">166</text>
<text x="310.2" y="234.0">N/A</text>
<text x="321.6" y="221.8">90</text>
<text x="284.9" y="238.9">88</text>
<text x="350.2" y="213.4">139</text>
<text x="324.9" y="261.8">76</text>
<text x="326.0" y="96.7">42</text>
<text x="362.2" y="138.1">108</text>
<text x="389.2" y="129.3">N/A</text>
<text x="381.0" y="178.3">19</text>
</g><g font-family="Liberation Sans, sans-serif">
<path d="M176.3 15.5h94.4a6.3 6.3 0 0 1 6.3 6.3v76.9a6.3 6.3 0 0 1-6.3 6.3h-62.2l-6.5 8.5-6.5-8.5h-19.2a6.3 6.3 0 0 1-6.3-6.3v-76.9a6.3 6.3 0 0 1 6.3-6.3z" fill="#000" fill-opacity=".25" filter="url(#pb)" transform="translate(0 1.5)"/>
<path d="M176.3 15.5h94.4a6.3 6.3 0 0 1 6.3 6.3v76.9a6.3 6.3 0 0 1-6.3 6.3h-62.2l-6.5 8.5-6.5-8.5h-19.2a6.3 6.3 0 0 1-6.3-6.3v-76.9a6.3 6.3 0 0 1 6.3-6.3z" fill="#fff"/>
<g font-size="9.3" fill="#333" text-anchor="middle"><text x="223.8" y="33.3">Bishkek</text><text x="223.8" y="43.6">2021-04-06 7:00 PM</text><text x="223.8" y="54">(LT)</text></g>
<rect x="180.2" y="56.6" width="86.8" height="37.9" fill="#fff" stroke="#00467f" stroke-width="1"/>
<rect x="180.2" y="56.6" width="86.8" height="17.8" fill="#00467f"/>
<rect x="235.5" y="74.4" width="31" height="19.6" fill="#00e400"/>
<path d="M235.5 74.4v20" stroke="#00467f" stroke-width="1"/>
<g font-size="9.3" text-anchor="middle"><text x="207.8" y="68" fill="#fff" font-weight="bold">Pollutant</text><text x="251.3" y="68" fill="#fff" font-weight="bold">AQI</text>
<text x="207.8" y="86.6" fill="#333">PM2.5</text><text x="251.3" y="86.6" fill="#222">45</text></g>
</g>
</svg></div>

<div class="abs sh" style="top:1px">Select a City</div>
<div class="abs sel" style="top:25.3px">Bishkek<span class="abs x">×</span><span class="abs a"></span></div>
<div class="abs sh" style="top:64.3px">Select a Parameter</div>
<div class="abs sel" style="top:88.3px">PM2.5<span class="abs x">×</span><span class="abs a"></span></div>
<div id="rss" class="abs"><b class="abs">Bishkek</b>
<svg class="abs" style="left:192px;top:17px" width="23" height="23" viewBox="0 0 24 24"><rect width="24" height="24" fill="#f6b73c"/><circle cx="5" cy="18.6" r="2.1" fill="#fff"/><path d="M3 10.7a10 10 0 0 1 10 10M3 4.6a16.1 16.1 0 0 1 16.1 16.1" fill="none" stroke="#fff" stroke-width="3"/></svg></div>
<div id="note" class="abs">Note: Values above 500 are considered Beyond the AQI. Follow<br>recommendations for the Hazardous category. Additional information<br>on reducing exposure to extremely high levels of particle pollution is<br>available <b>here</b>.</div>

<div class="abs tab" style="left:9px;width:72px;background:#fff;color:#333;border:1px solid #a8a8a8;border-top:2px solid #00467f;border-bottom:0;height:21px;line-height:20px;font-size:9.2px">AQI</div>
<div class="abs tab" style="left:83px;width:111px">Concentration</div>
<div class="abs tab" style="left:196px;width:92px">Historical</div>
<div id="tline" class="abs"></div>
<div id="learn" class="abs">Learn more about how the Air Quality Index [AQI] is calculated from the EPA <b>here</b>.</div>

<div id="chart" class="abs"><svg class="abs" style="left:0;top:0" width="534" height="195" viewBox="0 0 534 195" font-family="Liberation Sans, sans-serif">
<text x="267.6" y="16" text-anchor="middle" font-size="12" fill="#333" letter-spacing=".35">Bishkek – PM2.5</text>
<path d="M51.0 137.76H527.5" stroke="#e8e8e8" stroke-width="1"/>
<path d="M51.0 113.52H527.5" stroke="#e8e8e8" stroke-width="1"/>
<path d="M51.0 89.28H527.5" stroke="#e8e8e8" stroke-width="1"/>
<path d="M51.0 65.04H527.5" stroke="#e8e8e8" stroke-width="1"/>
<path d="M51.0 40.80H527.5" stroke="#e8e8e8" stroke-width="1"/>
<text x="40.3" y="163.90" text-anchor="end" font-size="7.6" font-weight="bold" fill="#1a1a1a">0</text>
<text x="40.3" y="139.66" text-anchor="end" font-size="7.6" font-weight="bold" fill="#1a1a1a">100</text>
<text x="40.3" y="115.42" text-anchor="end" font-size="7.6" font-weight="bold" fill="#1a1a1a">200</text>
<text x="40.3" y="91.18" text-anchor="end" font-size="7.6" font-weight="bold" fill="#1a1a1a">300</text>
<text x="40.3" y="66.94" text-anchor="end" font-size="7.6" font-weight="bold" fill="#1a1a1a">400</text>
<text x="40.3" y="42.70" text-anchor="end" font-size="7.6" font-weight="bold" fill="#1a1a1a">500</text>
<path d="M51.0 162.00H527.5" stroke="#c0d0e0" stroke-width="1"/>
<path d="M51.00 162.00v6" stroke="#c0d0e0" stroke-width="1"/>
<path d="M70.85 162.00v6" stroke="#c0d0e0" stroke-width="1"/>
<path d="M90.71 162.00v6" stroke="#c0d0e0" stroke-width="1"/>
<path d="M110.56 162.00v6" stroke="#c0d0e0" stroke-width="1"/>
<path d="M130.42 162.00v6" stroke="#c0d0e0" stroke-width="1"/>
<path d="M150.27 162.00v6" stroke="#c0d0e0" stroke-width="1"/>
<path d="M170.12 162.00v6" stroke="#c0d0e0" stroke-width="1"/>
<path d="M189.98 162.00v6" stroke="#c0d0e0" stroke-width="1"/>
<path d="M209.83 162.00v6" stroke="#c0d0e0" stroke-width="1"/>
<path d="M229.69 162.00v6" stroke="#c0d0e0" stroke-width="1"/>
<path d="M249.54 162.00v6" stroke="#c0d0e0" stroke-width="1"/>
<path d="M269.40 162.00v6" stroke="#c0d0e0" stroke-width="1"/>
<path d="M289.25 162.00v6" stroke="#c0d0e0" stroke-width="1"/>
<path d="M309.10 162.00v6" stroke="#c0d0e0" stroke-width="1"/>
<path d="M328.96 162.00v6" stroke="#c0d0e0" stroke-width="1"/>
<path d="M348.81 162.00v6" stroke="#c0d0e0" stroke-width="1"/>
<path d="M368.67 162.00v6" stroke="#c0d0e0" stroke-width="1"/>
<path d="M388.52 162.00v6" stroke="#c0d0e0" stroke-width="1"/>
<path d="M408.38 162.00v6" stroke="#c0d0e0" stroke-width="1"/>
<path d="M428.23 162.00v6" stroke="#c0d0e0" stroke-width="1"/>
<path d="M448.08 162.00v6" stroke="#c0d0e0" stroke-width="1"/>
<path d="M467.94 162.00v6" stroke="#c0d0e0" stroke-width="1"/>
<path d="M487.79 162.00v6" stroke="#c0d0e0" stroke-width="1"/>
<path d="M507.65 162.00v6" stroke="#c0d0e0" stroke-width="1"/>
<path d="M527.50 162.00v6" stroke="#c0d0e0" stroke-width="1"/>
<rect x="56.03" y="148.67" width="9.8" height="13.33" fill="#ffff00" stroke="#3a3a1a" stroke-width="1"/>
<text transform="translate(63.13 172.50) rotate(-45)" text-anchor="end" font-size="7.7" fill="#666">8 PM</text>
<rect x="75.88" y="149.40" width="9.8" height="12.60" fill="#ffff00" stroke="#3a3a1a" stroke-width="1"/>
<text transform="translate(82.98 172.50) rotate(-45)" text-anchor="end" font-size="7.7" fill="#666">9 PM</text>
<rect x="95.74" y="149.40" width="9.8" height="12.60" fill="#ffff00" stroke="#3a3a1a" stroke-width="1"/>
<text transform="translate(102.84 172.50) rotate(-45)" text-anchor="end" font-size="7.7" fill="#666">10 PM</text>
<rect x="115.59" y="148.18" width="9.8" height="13.82" fill="#ffff00" stroke="#3a3a1a" stroke-width="1"/>
<text transform="translate(122.69 172.50) rotate(-45)" text-anchor="end" font-size="7.7" fill="#666">11 PM</text>
<rect x="135.44" y="146.73" width="9.8" height="15.27" fill="#ffff00" stroke="#3a3a1a" stroke-width="1"/>
<text transform="translate(142.54 172.50) rotate(-45)" text-anchor="end" font-size="7.7" fill="#666">4/6/2021 12 AM</text>
<rect x="155.30" y="146.73" width="9.8" height="15.27" fill="#ffff00" stroke="#3a3a1a" stroke-width="1"/>
<text transform="translate(162.40 172.50) rotate(-45)" text-anchor="end" font-size="7.7" fill="#666">1 AM</text>
<rect x="175.15" y="147.46" width="9.8" height="14.54" fill="#ffff00" stroke="#3a3a1a" stroke-width="1"/>
<text transform="translate(182.25 172.50) rotate(-45)" text-anchor="end" font-size="7.7" fill="#666">2 AM</text>
<rect x="195.01" y="146.97" width="9.8" height="15.03" fill="#ffff00" stroke="#3a3a1a" stroke-width="1"/>
<text transform="translate(202.11 172.50) rotate(-45)" text-anchor="end" font-size="7.7" fill="#666">3 AM</text>
<rect x="214.86" y="146.97" width="9.8" height="15.03" fill="#ffff00" stroke="#3a3a1a" stroke-width="1"/>
<text transform="translate(221.96 172.50) rotate(-45)" text-anchor="end" font-size="7.7" fill="#666">4 AM</text>
<rect x="234.71" y="147.46" width="9.8" height="14.54" fill="#ffff00" stroke="#3a3a1a" stroke-width="1"/>
<text transform="translate(241.81 172.50) rotate(-45)" text-anchor="end" font-size="7.7" fill="#666">5 AM</text>
<rect x="254.57" y="147.46" width="9.8" height="14.54" fill="#ffff00" stroke="#3a3a1a" stroke-width="1"/>
<text transform="translate(261.67 172.50) rotate(-45)" text-anchor="end" font-size="7.7" fill="#666">6 AM</text>
<rect x="274.42" y="148.67" width="9.8" height="13.33" fill="#ffff00" stroke="#3a3a1a" stroke-width="1"/>
<text transform="translate(281.52 172.50) rotate(-45)" text-anchor="end" font-size="7.7" fill="#666">7 AM</text>
<rect x="294.28" y="150.61" width="9.8" height="11.39" fill="#00e400" stroke="#3a3a1a" stroke-width="1"/>
<text transform="translate(301.38 172.50) rotate(-45)" text-anchor="end" font-size="7.7" fill="#666">8 AM</text>
<rect x="314.13" y="151.33" width="9.8" height="10.67" fill="#00e400" stroke="#3a3a1a" stroke-width="1"/>
<text transform="translate(321.23 172.50) rotate(-45)" text-anchor="end" font-size="7.7" fill="#666">9 AM</text>
<rect x="333.99" y="152.79" width="9.8" height="9.21" fill="#00e400" stroke="#3a3a1a" stroke-width="1"/>
<text transform="translate(341.09 172.50) rotate(-45)" text-anchor="end" font-size="7.7" fill="#666">10 AM</text>
<rect x="353.84" y="152.79" width="9.8" height="9.21" fill="#00e400" stroke="#3a3a1a" stroke-width="1"/>
<text transform="translate(360.94 172.50) rotate(-45)" text-anchor="end" font-size="7.7" fill="#666">11 AM</text>
<rect x="373.69" y="148.18" width="9.8" height="13.82" fill="#ffff00" stroke="#3a3a1a" stroke-width="1"/>
<text transform="translate(380.79 172.50) rotate(-45)" text-anchor="end" font-size="7.7" fill="#666">12 PM</text>
<rect x="393.55" y="144.30" width="9.8" height="17.70" fill="#ffff00" stroke="#3a3a1a" stroke-width="1"/>
<text transform="translate(400.65 172.50) rotate(-45)" text-anchor="end" font-size="7.7" fill="#666">1 PM</text>
<rect x="413.40" y="144.30" width="9.8" height="17.70" fill="#ffff00" stroke="#3a3a1a" stroke-width="1"/>
<text transform="translate(420.50 172.50) rotate(-45)" text-anchor="end" font-size="7.7" fill="#666">2 PM</text>
<rect x="433.26" y="145.27" width="9.8" height="16.73" fill="#ffff00" stroke="#3a3a1a" stroke-width="1"/>
<text transform="translate(440.36 172.50) rotate(-45)" text-anchor="end" font-size="7.7" fill="#666">3 PM</text>
<rect x="453.11" y="146.73" width="9.8" height="15.27" fill="#ffff00" stroke="#3a3a1a" stroke-width="1"/>
<text transform="translate(460.21 172.50) rotate(-45)" text-anchor="end" font-size="7.7" fill="#666">4 PM</text>
<rect x="472.96" y="148.18" width="9.8" height="13.82" fill="#ffff00" stroke="#3a3a1a" stroke-width="1"/>
<text transform="translate(480.06 172.50) rotate(-45)" text-anchor="end" font-size="7.7" fill="#666">5 PM</text>
<rect x="492.82" y="149.64" width="9.8" height="12.36" fill="#ffff00" stroke="#3a3a1a" stroke-width="1"/>
<text transform="translate(499.92 172.50) rotate(-45)" text-anchor="end" font-size="7.7" fill="#666">6 PM</text>
<rect x="512.67" y="151.09" width="9.8" height="10.91" fill="#00e400" stroke="#3a3a1a" stroke-width="1"/>
<text transform="translate(519.77 172.50) rotate(-45)" text-anchor="end" font-size="7.7" fill="#666">7 PM</text>
<text transform="translate(21 98.5) rotate(-90)" text-anchor="middle" font-size="8.4" fill="#000">AQI</text>
</svg></div>
<div id="cc" class="abs">
 <div class="abs h"><div class="abs" style="left:0;width:166px;top:4.5px;font-size:10px">Current Conditions</div><div class="abs" style="left:0;width:166px;top:19.5px;font-size:8.7px;letter-spacing:-.3px">observed at</div><div class="abs" style="left:0;width:166px;top:33.3px;font-size:10px">Apr 6, 2021 7:00 PM (LT)</div></div>
 <div class="abs g"><div class="abs" style="left:0;width:166px;top:12px">45 AQI</div><div class="abs" style="left:0;width:166px;top:31px">Good</div><div class="abs" style="left:0;width:166px;top:50px">PM2.5</div></div>
 <div class="abs" style="left:0;width:166px;top:132.3px;text-align:center;font-size:8px;font-weight:bold;color:#222">Health Message</div>
 <div class="abs" style="left:3px;top:146.8px;font-size:8.03px;line-height:14px;color:#444;white-space:nowrap">The AQI value for your community is<br>between 0 and 50. Air quality is satisfactory<br>and poses little or no health risk.</div>
</div>
</body></html>
